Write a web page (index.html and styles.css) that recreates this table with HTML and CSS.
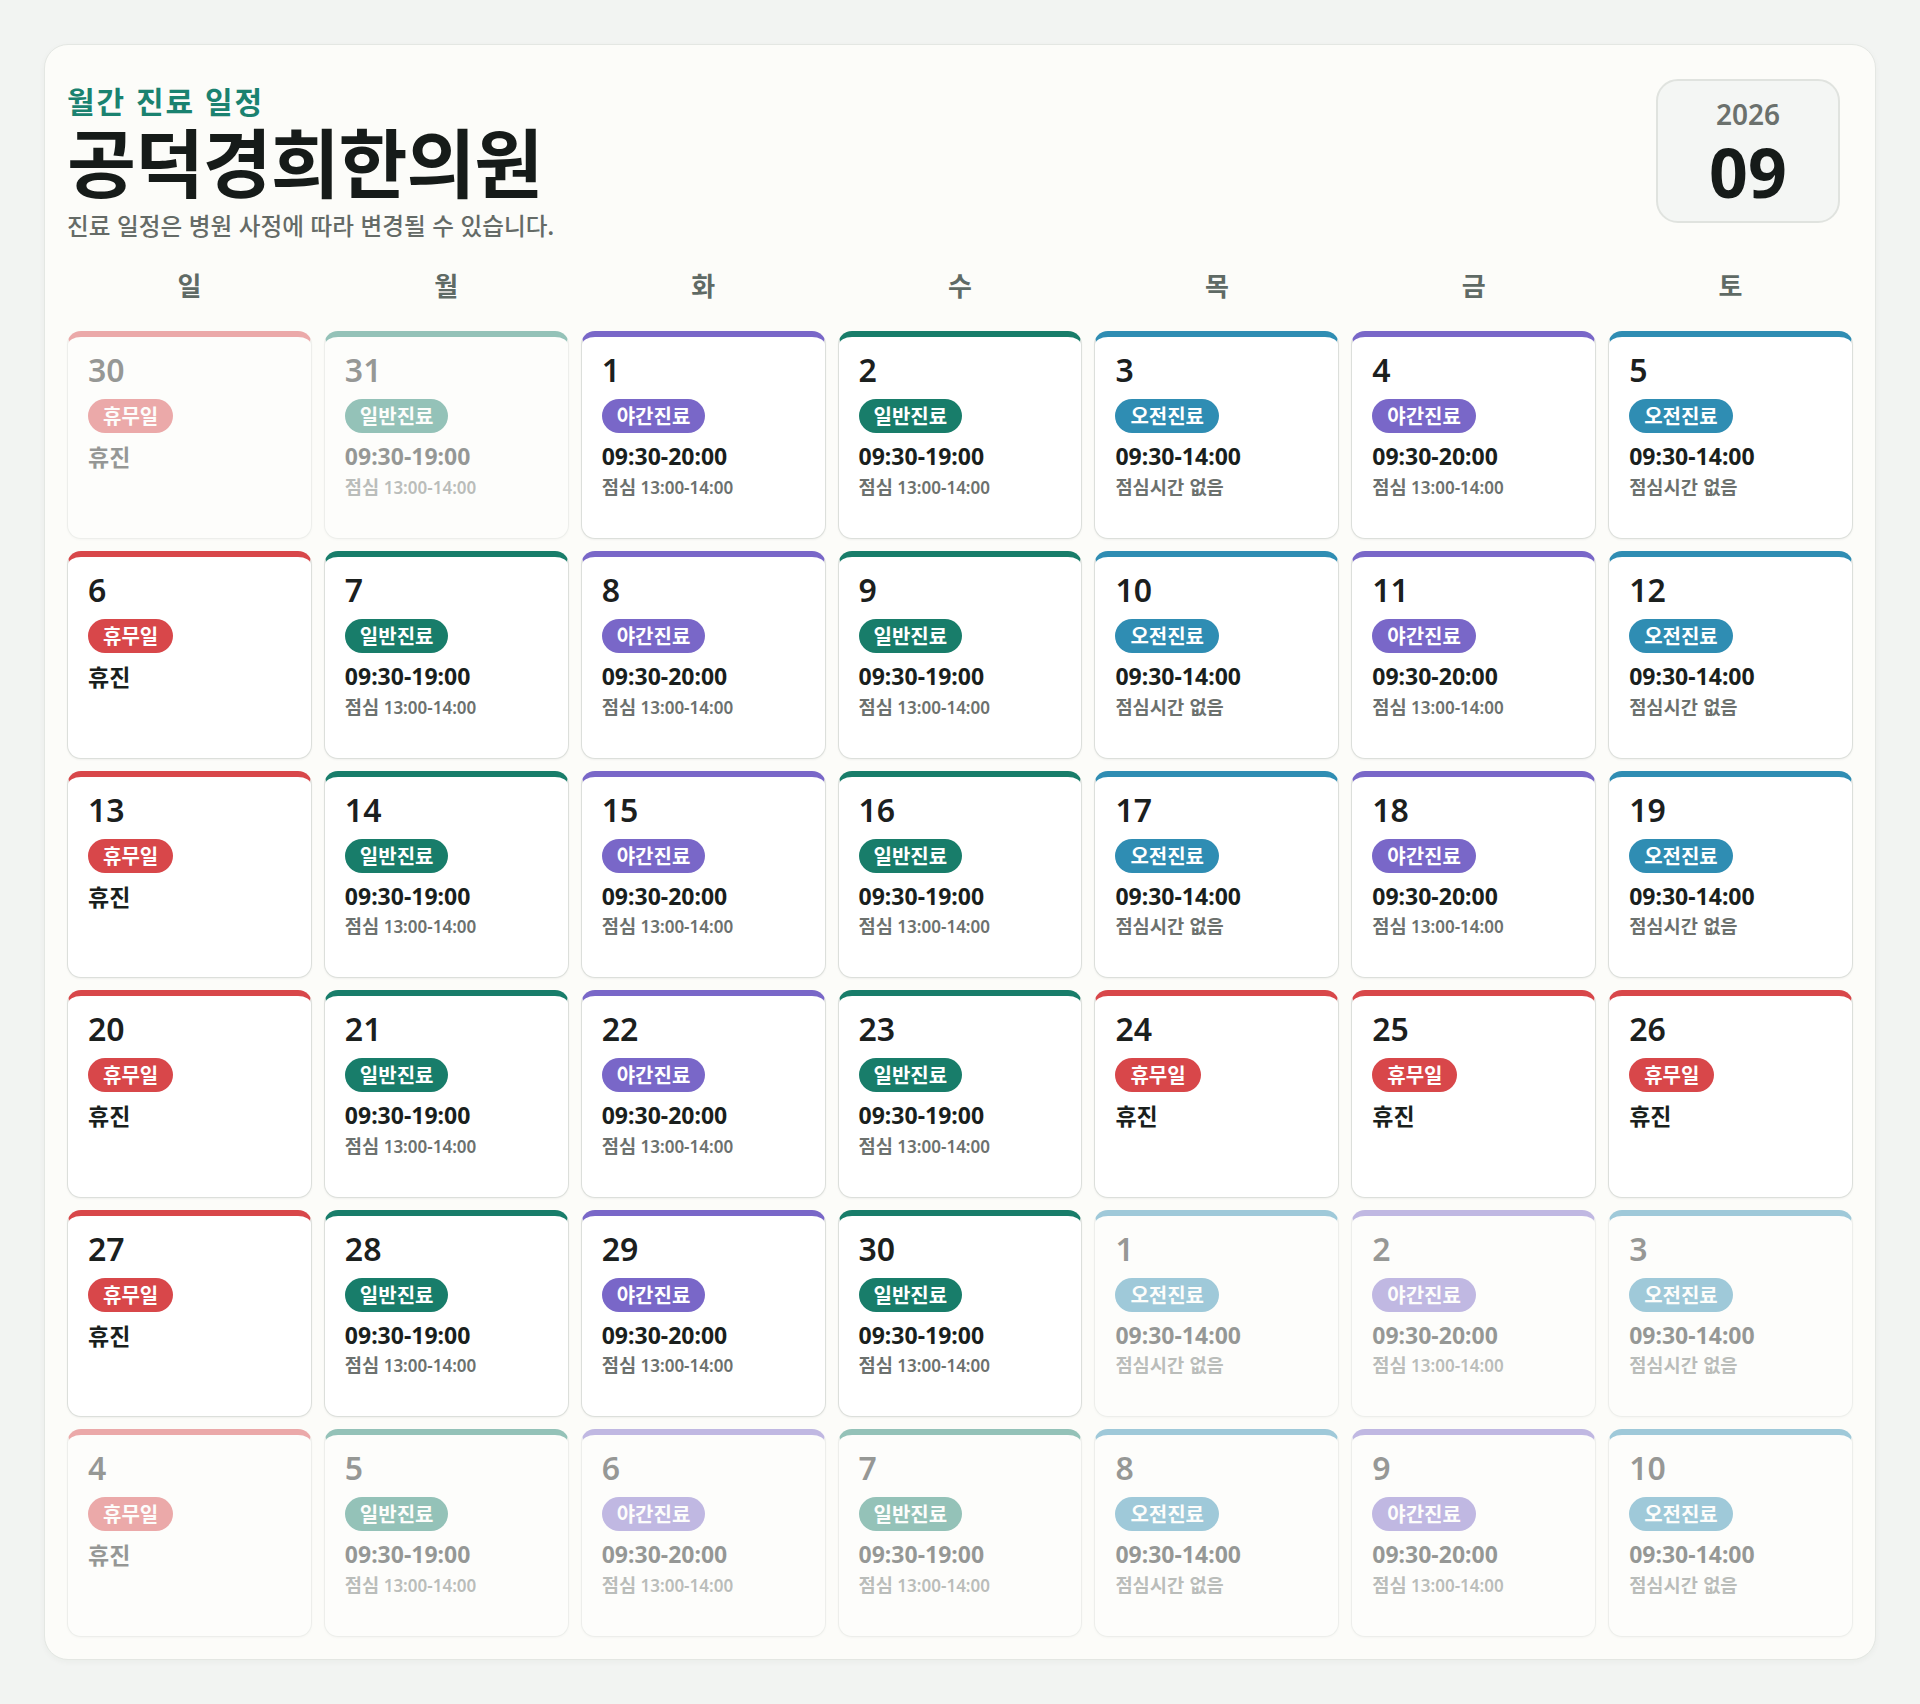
FILE: index.html
```html
<!DOCTYPE html>
<html lang="ko">
<head>
<meta charset="utf-8">
<title>공덕경희한의원 월간 진료 일정</title>
<link rel="stylesheet" href="styles.css">
</head>
<body>
<main class="card">
  <header class="header">
    <div class="titles">
      <div class="eyebrow">월간 진료 일정</div>
      <h1 class="title">공덕경희한의원</h1>
      <p class="subtitle">진료 일정은 병원 사정에 따라 변경될 수 있습니다.</p>
    </div>
    <div class="month">
      <div class="year">2026</div>
      <div class="mm">09</div>
    </div>
  </header>

  <div class="weekdays">
    <div>일</div><div>월</div><div>화</div><div>수</div><div>목</div><div>금</div><div>토</div>
  </div>

  <div class="grid">
    <!-- row 1 -->
    <div class="day off muted"><div class="num">30</div><span class="badge">휴무일</span><div class="hours ko">휴진</div></div>
    <div class="day reg muted"><div class="num">31</div><span class="badge">일반진료</span><div class="hours">09:30-19:00</div><div class="lunch"><span class="ko">점심</span> 13:00-14:00</div></div>
    <div class="day night"><div class="num">1</div><span class="badge">야간진료</span><div class="hours">09:30-20:00</div><div class="lunch"><span class="ko">점심</span> 13:00-14:00</div></div>
    <div class="day reg"><div class="num">2</div><span class="badge">일반진료</span><div class="hours">09:30-19:00</div><div class="lunch"><span class="ko">점심</span> 13:00-14:00</div></div>
    <div class="day am"><div class="num">3</div><span class="badge">오전진료</span><div class="hours">09:30-14:00</div><div class="lunch ko">점심시간 없음</div></div>
    <div class="day night"><div class="num">4</div><span class="badge">야간진료</span><div class="hours">09:30-20:00</div><div class="lunch"><span class="ko">점심</span> 13:00-14:00</div></div>
    <div class="day am"><div class="num">5</div><span class="badge">오전진료</span><div class="hours">09:30-14:00</div><div class="lunch ko">점심시간 없음</div></div>
    <!-- row 2 -->
    <div class="day off"><div class="num">6</div><span class="badge">휴무일</span><div class="hours ko">휴진</div></div>
    <div class="day reg"><div class="num">7</div><span class="badge">일반진료</span><div class="hours">09:30-19:00</div><div class="lunch"><span class="ko">점심</span> 13:00-14:00</div></div>
    <div class="day night"><div class="num">8</div><span class="badge">야간진료</span><div class="hours">09:30-20:00</div><div class="lunch"><span class="ko">점심</span> 13:00-14:00</div></div>
    <div class="day reg"><div class="num">9</div><span class="badge">일반진료</span><div class="hours">09:30-19:00</div><div class="lunch"><span class="ko">점심</span> 13:00-14:00</div></div>
    <div class="day am"><div class="num">10</div><span class="badge">오전진료</span><div class="hours">09:30-14:00</div><div class="lunch ko">점심시간 없음</div></div>
    <div class="day night"><div class="num">11</div><span class="badge">야간진료</span><div class="hours">09:30-20:00</div><div class="lunch"><span class="ko">점심</span> 13:00-14:00</div></div>
    <div class="day am"><div class="num">12</div><span class="badge">오전진료</span><div class="hours">09:30-14:00</div><div class="lunch ko">점심시간 없음</div></div>
    <!-- row 3 -->
    <div class="day off"><div class="num">13</div><span class="badge">휴무일</span><div class="hours ko">휴진</div></div>
    <div class="day reg"><div class="num">14</div><span class="badge">일반진료</span><div class="hours">09:30-19:00</div><div class="lunch"><span class="ko">점심</span> 13:00-14:00</div></div>
    <div class="day night"><div class="num">15</div><span class="badge">야간진료</span><div class="hours">09:30-20:00</div><div class="lunch"><span class="ko">점심</span> 13:00-14:00</div></div>
    <div class="day reg"><div class="num">16</div><span class="badge">일반진료</span><div class="hours">09:30-19:00</div><div class="lunch"><span class="ko">점심</span> 13:00-14:00</div></div>
    <div class="day am"><div class="num">17</div><span class="badge">오전진료</span><div class="hours">09:30-14:00</div><div class="lunch ko">점심시간 없음</div></div>
    <div class="day night"><div class="num">18</div><span class="badge">야간진료</span><div class="hours">09:30-20:00</div><div class="lunch"><span class="ko">점심</span> 13:00-14:00</div></div>
    <div class="day am"><div class="num">19</div><span class="badge">오전진료</span><div class="hours">09:30-14:00</div><div class="lunch ko">점심시간 없음</div></div>
    <!-- row 4 -->
    <div class="day off"><div class="num">20</div><span class="badge">휴무일</span><div class="hours ko">휴진</div></div>
    <div class="day reg"><div class="num">21</div><span class="badge">일반진료</span><div class="hours">09:30-19:00</div><div class="lunch"><span class="ko">점심</span> 13:00-14:00</div></div>
    <div class="day night"><div class="num">22</div><span class="badge">야간진료</span><div class="hours">09:30-20:00</div><div class="lunch"><span class="ko">점심</span> 13:00-14:00</div></div>
    <div class="day reg"><div class="num">23</div><span class="badge">일반진료</span><div class="hours">09:30-19:00</div><div class="lunch"><span class="ko">점심</span> 13:00-14:00</div></div>
    <div class="day off"><div class="num">24</div><span class="badge">휴무일</span><div class="hours ko">휴진</div></div>
    <div class="day off"><div class="num">25</div><span class="badge">휴무일</span><div class="hours ko">휴진</div></div>
    <div class="day off"><div class="num">26</div><span class="badge">휴무일</span><div class="hours ko">휴진</div></div>
    <!-- row 5 -->
    <div class="day off"><div class="num">27</div><span class="badge">휴무일</span><div class="hours ko">휴진</div></div>
    <div class="day reg"><div class="num">28</div><span class="badge">일반진료</span><div class="hours">09:30-19:00</div><div class="lunch"><span class="ko">점심</span> 13:00-14:00</div></div>
    <div class="day night"><div class="num">29</div><span class="badge">야간진료</span><div class="hours">09:30-20:00</div><div class="lunch"><span class="ko">점심</span> 13:00-14:00</div></div>
    <div class="day reg"><div class="num">30</div><span class="badge">일반진료</span><div class="hours">09:30-19:00</div><div class="lunch"><span class="ko">점심</span> 13:00-14:00</div></div>
    <div class="day am muted"><div class="num">1</div><span class="badge">오전진료</span><div class="hours">09:30-14:00</div><div class="lunch ko">점심시간 없음</div></div>
    <div class="day night muted"><div class="num">2</div><span class="badge">야간진료</span><div class="hours">09:30-20:00</div><div class="lunch"><span class="ko">점심</span> 13:00-14:00</div></div>
    <div class="day am muted"><div class="num">3</div><span class="badge">오전진료</span><div class="hours">09:30-14:00</div><div class="lunch ko">점심시간 없음</div></div>
    <!-- row 6 -->
    <div class="day off muted"><div class="num">4</div><span class="badge">휴무일</span><div class="hours ko">휴진</div></div>
    <div class="day reg muted"><div class="num">5</div><span class="badge">일반진료</span><div class="hours">09:30-19:00</div><div class="lunch"><span class="ko">점심</span> 13:00-14:00</div></div>
    <div class="day night muted"><div class="num">6</div><span class="badge">야간진료</span><div class="hours">09:30-20:00</div><div class="lunch"><span class="ko">점심</span> 13:00-14:00</div></div>
    <div class="day reg muted"><div class="num">7</div><span class="badge">일반진료</span><div class="hours">09:30-19:00</div><div class="lunch"><span class="ko">점심</span> 13:00-14:00</div></div>
    <div class="day am muted"><div class="num">8</div><span class="badge">오전진료</span><div class="hours">09:30-14:00</div><div class="lunch ko">점심시간 없음</div></div>
    <div class="day night muted"><div class="num">9</div><span class="badge">야간진료</span><div class="hours">09:30-20:00</div><div class="lunch"><span class="ko">점심</span> 13:00-14:00</div></div>
    <div class="day am muted"><div class="num">10</div><span class="badge">오전진료</span><div class="hours">09:30-14:00</div><div class="lunch ko">점심시간 없음</div></div>
  </div>
</main>
</body>
</html>
```

FILE: styles.css
```css
* { box-sizing: border-box; }

html, body { margin: 0; }

body {
  background: #f2f4f2;
  padding: 44px;
  font-family: "Noto Sans", "Noto Sans CJK KR", sans-serif;
  color: #171d1b;
}

.ko,
.eyebrow,
.title,
.subtitle,
.weekdays,
.badge {
  font-family: "Noto Sans CJK KR", "Noto Sans", sans-serif;
}

.card {
  background: #fcfcf9;
  border: 1px solid #e4e7e3;
  border-radius: 24px;
  box-shadow: 0 2px 6px rgba(30, 40, 35, 0.04);
  padding: 34px 22px 22px;
}

.header {
  display: flex;
  justify-content: space-between;
  align-items: flex-start;
}

.titles { padding-top: 3px; }

.eyebrow {
  font-size: 30px;
  line-height: 36.4px;
  font-weight: 700;
  letter-spacing: 0.06em;
  color: #1a8270;
}

.title {
  margin: 3px 0 0;
  font-size: 75px;
  line-height: 78px;
  font-weight: 700;
  letter-spacing: -0.015em;
  color: #161b19;
}

.subtitle {
  margin: 11px 0 0;
  font-size: 23.6px;
  line-height: 30.8px;
  font-weight: 500;
  color: #656b67;
}

.month {
  margin-right: 13px;
  width: 184px;
  height: 144px;
  border: 2px solid #e0e3df;
  border-radius: 22px;
  background: #f4f6f4;
  display: flex;
  flex-direction: column;
  align-items: center;
  padding-top: 16px;
  gap: 3px;
}

.year {
  font-size: 28px;
  line-height: 34px;
  font-weight: 600;
  color: #6b716d;
}

.mm {
  font-size: 68px;
  line-height: 76px;
  font-weight: 700;
  color: #161b19;
}

.weekdays {
  margin-top: 28px;
  display: grid;
  grid-template-columns: repeat(7, 1fr);
  gap: 12px;
  text-align: center;
  font-size: 26px;
  line-height: 31.2px;
  font-weight: 700;
  color: #5f6a65;
}

.grid {
  margin-top: 31px;
  display: grid;
  grid-template-columns: repeat(7, 1fr);
  grid-template-rows: repeat(6, 207.6px);
  gap: 12px;
}

.day {
  --c: #187d6a;
  background: #ffffff;
  border: 1px solid #dcdfdb;
  border-top: 6px solid var(--c);
  border-radius: 14px;
  box-shadow: 0 1px 2px rgba(0, 0, 0, 0.05);
  padding: 14px 20px 0;
  display: flex;
  flex-direction: column;
  align-items: flex-start;
}

.day.off   { --c: #d8474a; }
.day.reg   { --c: #187d6a; }
.day.night { --c: #7967c8; }
.day.am    { --c: #2f8db3; }

.day.muted { opacity: 0.45; }

.num {
  font-size: 32px;
  line-height: 38.4px;
  font-weight: 600;
  color: #1b201e;
}

.badge {
  margin-top: 9.6px;
  background: var(--c);
  color: #ffffff;
  font-size: 20px;
  line-height: 24px;
  font-weight: 700;
  padding: 5px 15px;
  border-radius: 999px;
}

.hours {
  margin-top: 9px;
  font-size: 23px;
  line-height: 28.6px;
  font-weight: 700;
  color: #1a1f1d;
}

.lunch {
  margin-top: 4px;
  font-size: 17px;
  line-height: 22.1px;
  font-weight: 600;
  color: #6c716e;
}

.lunch .ko,
.lunch.ko {
  font-size: 18.7px;
}
```
